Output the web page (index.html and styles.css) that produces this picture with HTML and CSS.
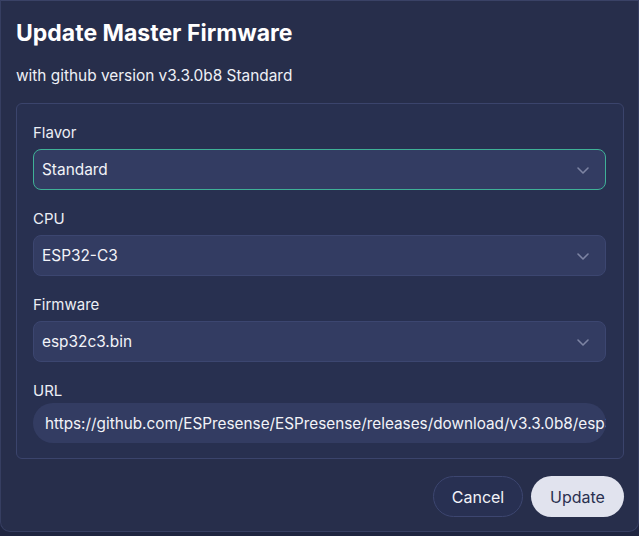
FILE: index.html
```html
<!doctype html>
<html lang="en">
  <head>
    <meta charset="UTF-8">
    <meta name="viewport" content="width=device-width, initial-scale=1.0">
    <title>Update Master Firmware</title>
    <link rel="stylesheet" href="styles.css">
  </head>
  <body>
    <!-- Page content behind the dialog -->
    <div class="page">
      <div class="row">
        <span class="cell c-ver">0.0.0 / 0</span>
        <span class="cell c-cpu">ESP32</span>
        <span class="cell c-flavor">Standard</span>
      </div>
    </div>

    <!-- Update dialog -->
    <div class="modal">
      <h2 class="modal-title">Update Master Firmware</h2>
      <p class="modal-sub">with github version v3.3.0b8 Standard</p>
      <div class="fieldset">
        <div class="field">
          <label>Flavor</label>
          <div class="select focused">
            <span>Standard</span>
            <svg class="chev" viewBox="0 0 20 20"><path d="M5 8l5 5 5-5" fill="none" stroke="currentColor" stroke-width="1.6" stroke-linecap="round" stroke-linejoin="round"/></svg>
          </div>
        </div>
        <div class="field">
          <label>CPU</label>
          <div class="select">
            <span>ESP32-C3</span>
            <svg class="chev" viewBox="0 0 20 20"><path d="M5 8l5 5 5-5" fill="none" stroke="currentColor" stroke-width="1.6" stroke-linecap="round" stroke-linejoin="round"/></svg>
          </div>
        </div>
        <div class="field">
          <label>Firmware</label>
          <div class="select">
            <span>esp32c3.bin</span>
            <svg class="chev" viewBox="0 0 20 20"><path d="M5 8l5 5 5-5" fill="none" stroke="currentColor" stroke-width="1.6" stroke-linecap="round" stroke-linejoin="round"/></svg>
          </div>
        </div>
        <div class="field url">
          <label>URL</label>
          <div class="input">https://github.com/ESPresense/ESPresense/releases/download/v3.3.0b8/esp32c3.bin</div>
        </div>
      </div>
      <div class="actions">
        <button class="btn btn-cancel">Cancel</button>
        <button class="btn btn-update">Update</button>
      </div>
    </div>
  </body>
</html>
```

FILE: styles.css
```css
body {
  font-family: 'Inter', 'Liberation Sans', sans-serif;
  background: #1f2540;
  color: #eef0f6;
  margin: 0;
  padding: 0;
  width: 639px;
  height: 536px;
  overflow: hidden;
  position: relative;
}
/* Table rows behind the dialog */
.page {
  padding-top: 532px;
}
.row {
  display: flex;
  font-size: 15px;
  color: #9aa0b8;
  line-height: 20px;
}
.cell.c-ver { margin-left: 195px; width: 153px; }
.cell.c-cpu { width: 162px; }
/* Dialog */
.modal {
  position: absolute;
  left: 0;
  top: 0;
  width: 639px;
  height: 532px;
  box-sizing: border-box;
  background: #272e4b;
  border: 1px solid #363e61;
  border-top-color: #3a4266;
  border-radius: 0 0 10px 10px;
  padding: 18px 14px 0 15px;
  display: flex;
  flex-direction: column;
}
.modal-title {
  margin: 0;
  font-size: 23px;
  font-weight: 700;
  line-height: 28px;
  color: #fff;
}
.modal-sub {
  margin: 19px 0 0 0;
  font-size: 15.4px;
  line-height: 20px;
  color: #eef0f6;
}
.fieldset {
  margin-top: 17px;
  height: 356px;
  box-sizing: border-box;
  background: #283050;
  border: 1px solid #3b446c;
  border-radius: 6px;
  padding: 19px 17px 0 16px;
  display: flex;
  flex-direction: column;
  gap: 19px;
}
.field {
  display: flex;
  flex-direction: column;
  gap: 6px;
}
.field label {
  font-size: 15px;
  line-height: 20px;
  color: #eceef5;
}
.select {
  height: 41px;
  box-sizing: border-box;
  background: #333c62;
  border: 1px solid #3c4670;
  border-radius: 8px;
  padding: 0 12px 0 8px;
  display: flex;
  align-items: center;
  justify-content: space-between;
  font-size: 15.4px;
  color: #f2f3f8;
}
.select.focused {
  border-color: #3fb197;
}
.chev {
  width: 20px;
  height: 20px;
  color: #7d84a3;
}
.field.url {
  gap: 2px;
}
.input {
  height: 40px;
  box-sizing: border-box;
  background: #333c62;
  border-radius: 20px;
  padding: 0 11px 0 12px;
  display: flex;
  align-items: center;
  font-size: 15.3px;
  color: #f2f3f8;
  white-space: nowrap;
  overflow: hidden;
}
.actions {
  margin-top: 17px;
  display: flex;
  justify-content: flex-end;
  gap: 8px;
}
.btn {
  height: 41px;
  border-radius: 21px;
  font-family: inherit;
  font-size: 16px;
  cursor: pointer;
}
.btn-cancel {
  width: 90px;
  background: #283052;
  border: 1px solid #3d4670;
  color: #f2f3f8;
}
.btn-update {
  width: 93px;
  background: #e1e3ee;
  border: none;
  color: #2a3050;
}
```
